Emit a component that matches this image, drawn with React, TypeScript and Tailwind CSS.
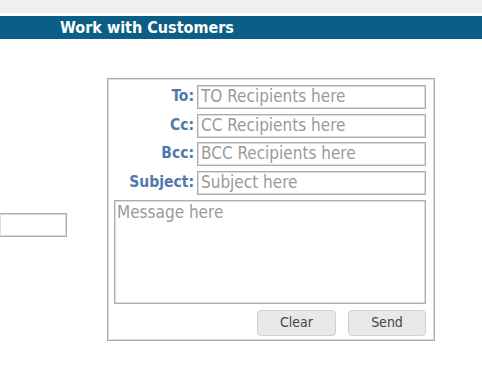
const font = { fontFamily: '"DejaVu Sans Condensed", "DejaVu Sans", sans-serif' };

const box = "border border-[#adadad] shadow-[inset_0_0_0_1px_#dcdcdc]";

const Field = ({ label, placeholder }: { label: string; placeholder: string }) => (
    <div className="flex items-center h-[24px]">
        <label className="w-[83px] pr-[3px] text-right text-[15.5px] font-bold text-[#5079ab]">{label}</label>
        <input
            placeholder={placeholder}
            className={`w-[229px] h-[24px] ${box} px-[3px] text-[17px] text-[#555] placeholder:text-[#9a9a9a] outline-none`}
        />
    </div>
);

export default function App() {
    return (
        <div className="w-[482px] h-[373px] bg-white overflow-hidden relative" style={font}>
            <div className="h-[13px] bg-[#efefef]" />
            <div className="mt-[3px] h-[23px] bg-[#0b5e86] pl-[60px] flex items-center">
                <span className="text-white text-[16px] font-bold">Work with Customers</span>
            </div>

            <div className="flex mt-[39px]">
                <div className="w-[107px] pt-[135px]">
                    <input className={`w-[68px] h-[24px] -ml-[1px] ${box} outline-none`} />
                </div>
                <div className={`w-[328px] h-[263px] ${box} pt-[6px] pl-[6px] flex flex-col gap-[4.5px]`}>
                    <Field label="To:" placeholder="TO Recipients here" />
                    <Field label="Cc:" placeholder="CC Recipients here" />
                    <Field label="Bcc:" placeholder="BCC Recipients here" />
                    <Field label="Subject:" placeholder="Subject here" />
                    <textarea
                        placeholder="Message here"
                        className={`mt-[1px] w-[312px] h-[104px] ${box} px-[2px] py-[1px] text-[17px] leading-[20px] resize-none outline-none placeholder:text-[#9a9a9a]`}
                    />
                    <div className="flex justify-end gap-[12px] w-[312px] mt-[1px]">
                        <button className="w-[79px] h-[26px] rounded-[4px] border border-[#d0d0d0] bg-[#e8e8e8] text-[14px] text-[#444]">Clear</button>
                        <button className="w-[78px] h-[26px] rounded-[4px] border border-[#d0d0d0] bg-[#e8e8e8] text-[14px] text-[#444]">Send</button>
                    </div>
                </div>
            </div>
        </div>
    );
}
